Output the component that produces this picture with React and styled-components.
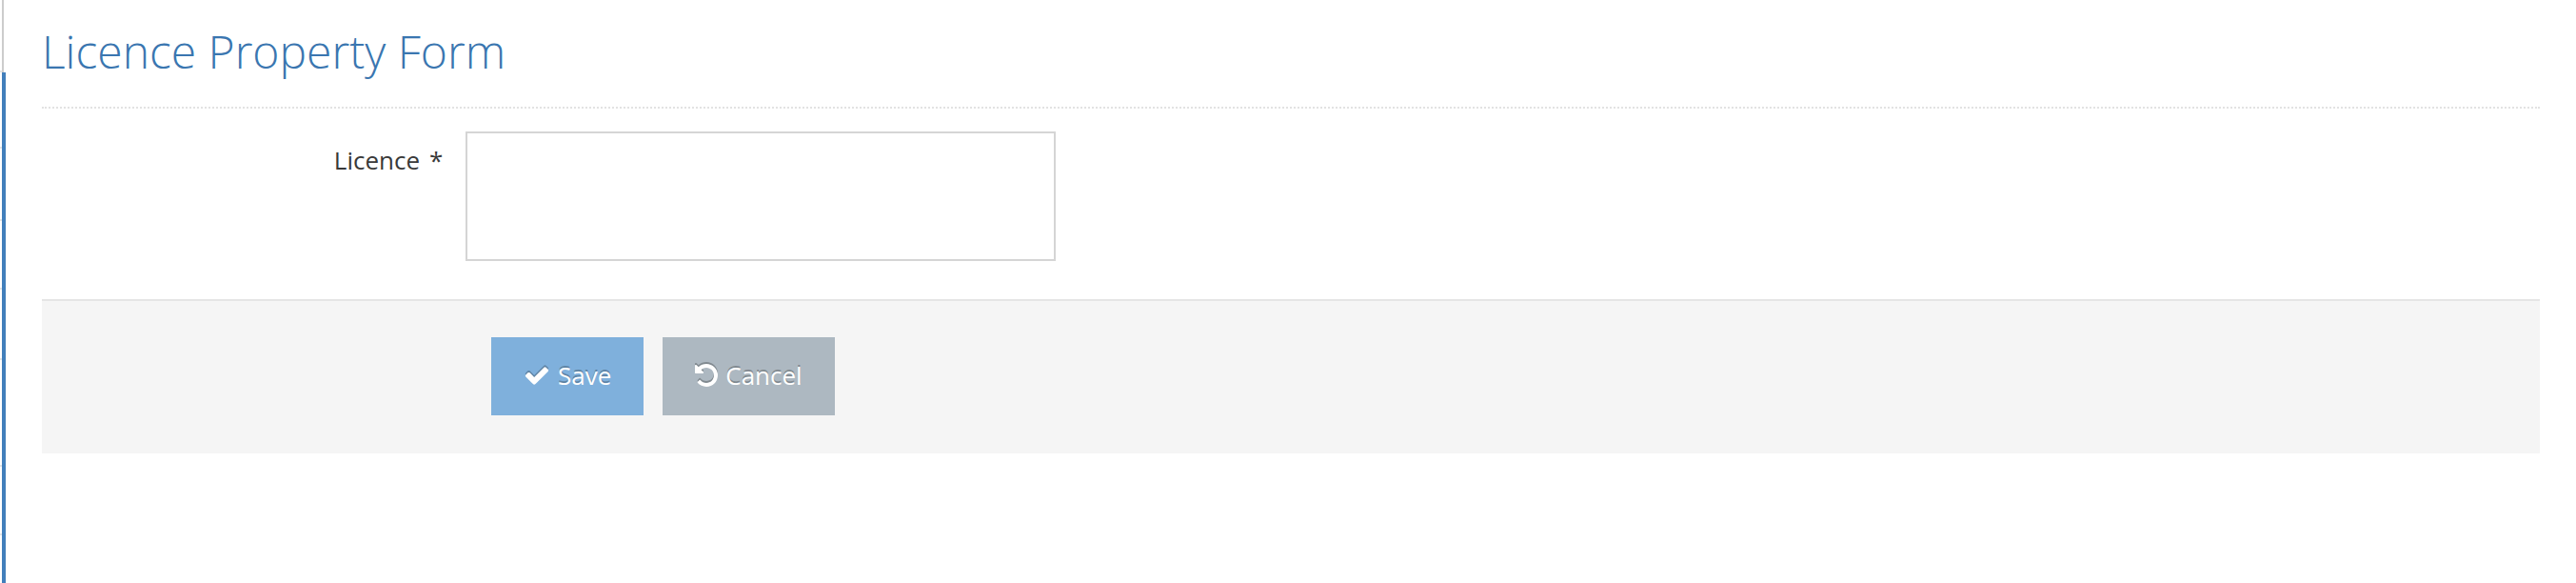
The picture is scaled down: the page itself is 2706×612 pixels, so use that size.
import React from "react";
import styled, { createGlobalStyle } from "styled-components";

const GlobalStyle = createGlobalStyle`
  *, *::before, *::after { box-sizing: border-box; }
  body {
    margin: 0;
    background: #fff;
    color: #393939;
    font-family: "Open Sans", sans-serif;
    font-size: 26px;
    line-height: 40px;
  }
`;

const Page = styled.div`
  display: flex;
  min-height: 100vh;
`;

const SideEdge = styled.aside`
  flex: none;
  display: flex;
  width: 6px;
`;

const Ticks = styled.div`
  display: flex;
  flex-direction: column;
  width: 2px;
`;

const Tick = styled.div`
  height: ${(p) => p.$height}px;
  border-bottom: 2px solid #e5e5e5;
`;

const Rail = styled.div`
  flex: 1;
  display: flex;
  flex-direction: column;
`;

const RailTop = styled.div`
  width: 2px;
  height: 76px;
  background: #ccc;
`;

const RailActive = styled.div`
  flex: 1;
  background: #427fbb;
`;

const Content = styled.main`
  flex: 1;
  min-width: 0;
  padding: 20px 38px 40px;
`;

const PageHeader = styled.header`
  margin-bottom: 24px;
  padding-bottom: 24px;
  border-bottom: 2px dotted #e2e2e2;
`;

const Title = styled.h1`
  margin: 0;
  color: #3a76b0;
  font-size: 48px;
  font-weight: 300;
  line-height: 68px;
`;

const Row = styled.div`
  display: flex;
  margin: 0 -24px;
`;

const LabelColumn = styled.div`
  flex: none;
  width: calc(100% / 6);
  padding-top: 10px;
  text-align: right;
`;

const RequiredMark = styled.span`
  margin-left: 10px;
`;

const FieldColumn = styled.div`
  flex: none;
  width: 25%;
  padding: 0 24px;
`;

const TextArea = styled.textarea`
  display: block;
  width: 100%;
  height: 136px;
  padding: 6px 8px;
  border: 2px solid #d5d5d5;
  border-radius: 0;
  outline: none;
  resize: none;
  background: #fff;
  color: #393939;
  font: inherit;
`;

const Actions = styled.div`
  margin-top: 40px;
  padding: 38px 40px 40px;
  border-top: 2px solid #e5e5e5;
  background: #f5f5f5;
`;

const ButtonColumn = styled.div`
  display: flex;
  gap: 20px;
  margin-left: calc(100% / 6);
  padding: 0 24px;
`;

const Button = styled.button`
  display: flex;
  align-items: center;
  gap: 8px;
  height: 82px;
  padding: 0 34px 2px;
  border: 0;
  background: ${(p) => p.$tone};
  color: #fff;
  font: inherit;
  text-shadow: 0 -2px 0 rgba(0, 0, 0, 0.25);
  cursor: pointer;
`;

const Icon = styled.svg`
  flex: none;
  width: ${(p) => p.$width}px;
  height: 28px;
  fill: currentColor;
  filter: drop-shadow(0 -2px 0 rgba(0, 0, 0, 0.25));
`;

const tickHeights = [76, 80, 76, 72, 74, 112, 72];

export default function App() {
  return (
    <>
      <GlobalStyle />
      <Page>
        <SideEdge aria-hidden="true">
          <Ticks>
            {tickHeights.map((height, i) => (
              <Tick key={i} $height={height} />
            ))}
          </Ticks>
          <Rail>
            <RailTop />
            <RailActive />
          </Rail>
        </SideEdge>
        <Content>
          <PageHeader>
            <Title>Licence Property Form</Title>
          </PageHeader>
          <form onSubmit={(e) => e.preventDefault()}>
            <Row>
              <LabelColumn>
                <label htmlFor="licence">
                  Licence<RequiredMark>*</RequiredMark>
                </label>
              </LabelColumn>
              <FieldColumn>
                <TextArea id="licence" required />
              </FieldColumn>
            </Row>
            <Actions>
              <Row>
                <ButtonColumn>
                  <Button type="submit" $tone="#7fb0dc">
                    <Icon $width={28} viewBox="0 0 1792 1792" aria-hidden="true">
                      <path d="M1671 566q0 40-28 68l-724 724-136 136q-28 28-68 28t-68-28l-136-136-362-362q-28-28-28-68t28-68l136-136q28-28 68-28t68 28l294 295 656-657q28-28 68-28t68 28l136 136q28 28 28 68z" />
                    </Icon>
                    Save
                  </Button>
                  <Button type="button" $tone="#adb8c1">
                    <Icon $width={24} viewBox="128 0 1536 1792" aria-hidden="true">
                      <path d="M1664 896q0 156-61 298t-164 245-245 164-298 61q-172 0-327-72.500t-264-204.500q-7-10-6.500-22.500t8.500-20.500l137-138q10-9 25-9 16 2 23 12 73 95 179 147t225 52q104 0 198.500-40.500t163.500-109.500 109.500-163.500 40.500-198.500-40.500-198.500-109.500-163.500-163.500-109.500-198.500-40.500q-98 0-188 35.500t-160 101.500l137 138q31 30 14 69-17 40-59 40h-448q-26 0-45-19t-19-45v-448q0-42 40-59 39-17 69 14l130 129q107-101 244.500-156.500t284.500-55.500q156 0 298 61t245 164 164 245 61 298z" />
                    </Icon>
                    Cancel
                  </Button>
                </ButtonColumn>
              </Row>
            </Actions>
          </form>
        </Content>
      </Page>
    </>
  );
}
